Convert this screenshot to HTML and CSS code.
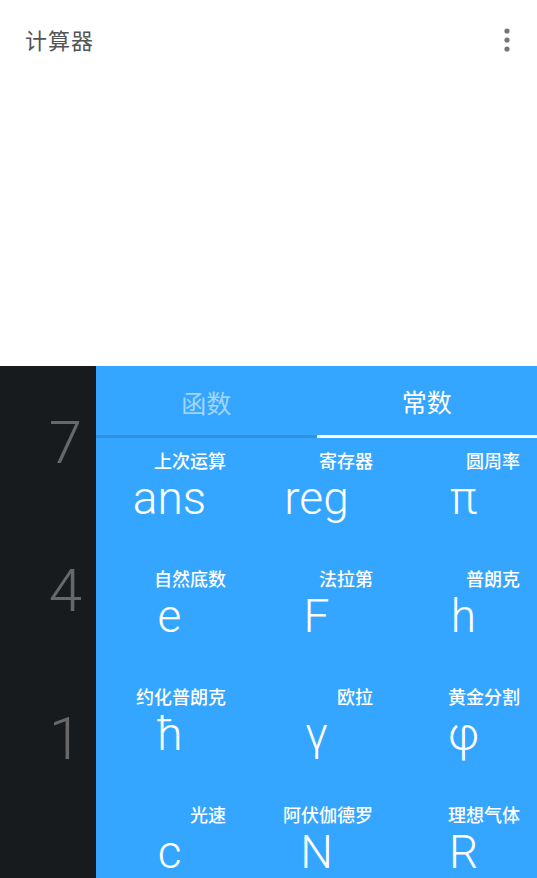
FILE: index.html
```html
<!DOCTYPE html>
<html lang="zh-CN">
<head>
    <meta charset="UTF-8">
    <meta name="viewport" content="width=device-width, initial-scale=1.0">
    <title>计算器</title>
    <link rel="stylesheet" href="styles.css">
</head>
<body>
    <div class="display">
        <div class="toolbar">
            <span class="app-title">计算器</span>
            <svg class="menu-icon" width="10" height="26" viewBox="0 0 10 26">
                <circle cx="5" cy="4" r="2.6" fill="#757575"/>
                <circle cx="5" cy="13" r="2.6" fill="#757575"/>
                <circle cx="5" cy="22" r="2.6" fill="#757575"/>
            </svg>
        </div>
    </div>

    <div class="pad">
        <div class="numbers">
            <div class="digit">7</div>
            <div class="digit">4</div>
            <div class="digit">1</div>
        </div>

        <div class="advanced">
            <div class="tabs">
                <div class="tab">函数</div>
                <div class="tab active">常数</div>
            </div>
            <div class="constants">
                <div class="const"><span class="const-label">上次运算</span><span class="const-sym">ans</span></div>
                <div class="const"><span class="const-label">寄存器</span><span class="const-sym">reg</span></div>
                <div class="const"><span class="const-label">圆周率</span><span class="const-sym">π</span></div>

                <div class="const"><span class="const-label">自然底数</span><span class="const-sym">e</span></div>
                <div class="const"><span class="const-label">法拉第</span><span class="const-sym">F</span></div>
                <div class="const"><span class="const-label">普朗克</span><span class="const-sym">h</span></div>

                <div class="const"><span class="const-label">约化普朗克</span><span class="const-sym">ħ</span></div>
                <div class="const"><span class="const-label">欧拉</span><span class="const-sym">γ</span></div>
                <div class="const"><span class="const-label">黄金分割</span><span class="const-sym">φ</span></div>

                <div class="const"><span class="const-label">光速</span><span class="const-sym">c</span></div>
                <div class="const"><span class="const-label">阿伏伽德罗</span><span class="const-sym">N</span></div>
                <div class="const"><span class="const-label">理想气体</span><span class="const-sym">R</span></div>
            </div>
        </div>
    </div>
</body>
</html>
```

FILE: styles.css
```css
* {
    margin: 0;
    padding: 0;
    box-sizing: border-box;
}

body {
    font-family: Roboto, "Noto Sans CJK SC", sans-serif;
    width: 537px;
    height: 878px;
    overflow: hidden;
    display: flex;
    flex-direction: column;
    background: white;
}

.display {
    height: 366px;
    flex-shrink: 0;
    background: white;
}

.toolbar {
    height: 84px;
    display: flex;
    align-items: center;
    justify-content: space-between;
    padding: 0 25px 5px 25px;
}

.app-title {
    font-family: "Noto Sans CJK SC", sans-serif;
    font-size: 22px;
    color: #555555;
    letter-spacing: 1px;
    margin-top: -2px;
}

.pad {
    flex: 1;
    min-height: 0;
    overflow: hidden;
    display: flex;
    background: #181b1e;
}

.numbers {
    width: 96px;
    display: flex;
    flex-direction: column;
    padding-top: 3px;
}

.digit {
    height: 148px;
    flex-shrink: 0;
    line-height: 148px;
    text-align: right;
    padding-right: 14px;
    font-size: 60px;
    font-weight: 300;
    color: #686868;
}

.advanced {
    flex: 1;
    background: #35a6ff;
    display: flex;
    flex-direction: column;
}

.tabs {
    height: 72px;
    flex-shrink: 0;
    display: flex;
    border-bottom: 3px solid #2f92e0;
}

.tab {
    flex: 1;
    display: flex;
    align-items: center;
    justify-content: center;
    font-family: "Noto Sans CJK SC", sans-serif;
    font-size: 25px;
    color: rgba(255, 255, 255, 0.55);
    padding-top: 3px;
}

.tab.active {
    color: white;
    border-bottom: 3px solid white;
    margin-bottom: -3px;
    padding-top: 0;
}

.constants {
    display: grid;
    grid-template-columns: repeat(3, 1fr);
    grid-auto-rows: 118px;
    padding-top: 2px;
}

.const {
    display: flex;
    flex-direction: column;
    padding-top: 7px;
}

.const-label {
    font-family: "Noto Sans CJK SC", sans-serif;
    font-size: 18px;
    font-weight: 500;
    line-height: 26px;
    color: white;
    text-align: right;
    padding-right: 17px;
}

.const-sym {
    font-size: 46px;
    font-weight: 300;
    line-height: 50px;
    color: white;
    text-align: center;
}
```
